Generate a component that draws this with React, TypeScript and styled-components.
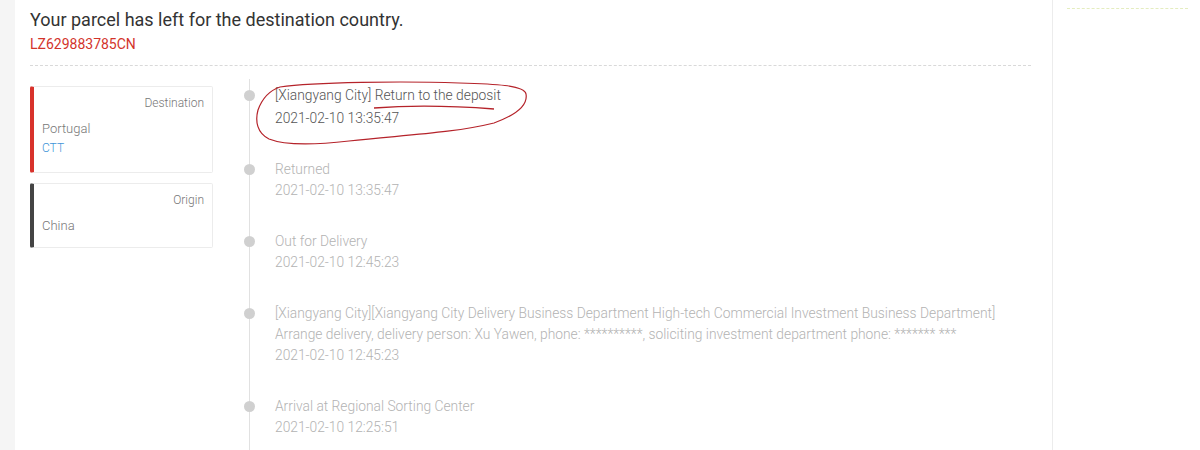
import { createGlobalStyle } from "styled-components"
import styled from "styled-components"

const GlobalStyle = createGlobalStyle`
  html, body {
    margin: 0;
    padding: 0;
    background: #fff;
    font-family: Roboto, "Liberation Sans", sans-serif;
  }
`

const Page = styled.div`
  display: flex;
  height: 450px;
  overflow: hidden;
`

const Gutter = styled.div`
  width: 15px;
  flex-shrink: 0;
  background: #f5f5f5;
`

const Main = styled.main`
  width: 1038px;
  flex-shrink: 0;
  padding: 8px 21px 0 15px;
  box-sizing: border-box;
  border-right: 1px solid #ececec;
`

const Title = styled.h1`
  margin: 0;
  font-size: 18px;
  font-weight: 400;
  line-height: 24px;
  color: #333;
`

const Tracking = styled.div`
  font-size: 14px;
  line-height: 22px;
  color: #d3342b;
  margin-top: 1px;
`

const Divider = styled.hr`
  margin: 10px 0 0;
  border: none;
  border-top: 1px dashed #d9d9d9;
`

const Body = styled.div`
  display: flex;
  padding-top: 20px;
`

const Side = styled.aside`
  width: 183px;
  display: flex;
  flex-direction: column;
  gap: 10px;
  flex-shrink: 0;
`

const Card = styled.div<{ $accent: string }>`
  border: 1px solid #ececec;
  border-left: 4px solid ${(p) => p.$accent};
  border-radius: 2px;
  padding: 8px 8px 14px 8px;
  font-weight: 300;
  &:last-child {
    padding-bottom: 12px;
  }
`

const CardLabel = styled.div`
  text-align: right;
  font-size: 12px;
  color: #777;
  line-height: 16px;
  margin-bottom: 9px;
`

const Place = styled.div`
  font-size: 13px;
  color: #777;
  line-height: 18px;
`

const Carrier = styled.div`
  font-size: 12px;
  color: #3f95d8;
  line-height: 20px;
`

const Timeline = styled.ol`
  list-style: none;
  margin: -7px 0 0 36px;
  padding: 0;
  flex: 1;
  border-left: 1px solid #e1e1e1;
`

const Event = styled.li<{ $active?: boolean }>`
  position: relative;
  padding: 0 0 30px 25px;
  font-size: 13.8px;
  font-weight: 300;
  line-height: 21px;
  color: ${(p) => (p.$active ? "#555" : "#b3b3b3")};
  &:first-child {
    padding-top: 5px;
    padding-bottom: 29px;
    line-height: 23px;
  }
  &::before {
    content: "";
    position: absolute;
    left: -6px;
    top: 5px;
    width: 11px;
    height: 11px;
    border-radius: 50%;
    background: #d0d0d0;
  }
  &:first-child::before {
    top: 11px;
  }
`

const Scribble = styled.svg`
  position: absolute;
  left: 4px;
  top: 2px;
  pointer-events: none;
`

const Aside = styled.div`
  flex: 1;
  padding: 8px 12px 0 14px;
`

const Rule = styled.div`
  border-top: 1px dashed #e4edbf;
`

const events = [
  {
    lines: ["[Xiangyang City] Return to the deposit"],
    time: "2021-02-10 13:35:47",
    active: true,
  },
  { lines: ["Returned"], time: "2021-02-10 13:35:47" },
  { lines: ["Out for Delivery"], time: "2021-02-10 12:45:23" },
  {
    lines: [
      "[Xiangyang City][Xiangyang City Delivery Business Department High-tech Commercial Investment Business Department]",
      "Arrange delivery, delivery person: Xu Yawen, phone: **********, soliciting investment department phone: ******* ***",
    ],
    time: "2021-02-10 12:45:23",
  },
  { lines: ["Arrival at Regional Sorting Center"], time: "2021-02-10 12:25:51" },
]

export default function App() {
  return (
    <>
      <GlobalStyle />
      <Page>
        <Gutter />
        <Main>
          <Title>Your parcel has left for the destination country.</Title>
          <Tracking>LZ629883785CN</Tracking>
          <Divider />
          <Body>
            <Side>
              <Card $accent="#d8322b">
                <CardLabel>Destination</CardLabel>
                <Place>Portugal</Place>
                <Carrier>CTT</Carrier>
              </Card>
              <Card $accent="#444">
                <CardLabel>Origin</CardLabel>
                <Place>China</Place>
              </Card>
            </Side>
            <Timeline>
              {events.map((e, i) => (
                <Event key={i} $active={e.active}>
                  {e.lines.map((l, j) => (
                    <div key={j}>{l}</div>
                  ))}
                  <div>{e.time}</div>
                  {i === 0 && (
                    <Scribble width="280" height="68" viewBox="0 0 280 68">
                      <path
                        d="M26 6 C60 1 150 0 205 2 C240 3 270 4 272 13 C274 24 262 34 240 42 C200 52 150 54 95 60 C60 64 30 64 15 58 C3 52 1 40 4 29 C8 18 14 10 26 6 Z"
                        fill="none"
                        stroke="#b5232a"
                        strokeWidth="1.2"
                      />
                      <path
                        d="M120 27 C160 24 200 25 240 28"
                        fill="none"
                        stroke="#b5232a"
                        strokeWidth="1.3"
                      />
                    </Scribble>
                  )}
                </Event>
              ))}
            </Timeline>
          </Body>
        </Main>
        <Aside>
          <Rule />
        </Aside>
      </Page>
    </>
  )
}
